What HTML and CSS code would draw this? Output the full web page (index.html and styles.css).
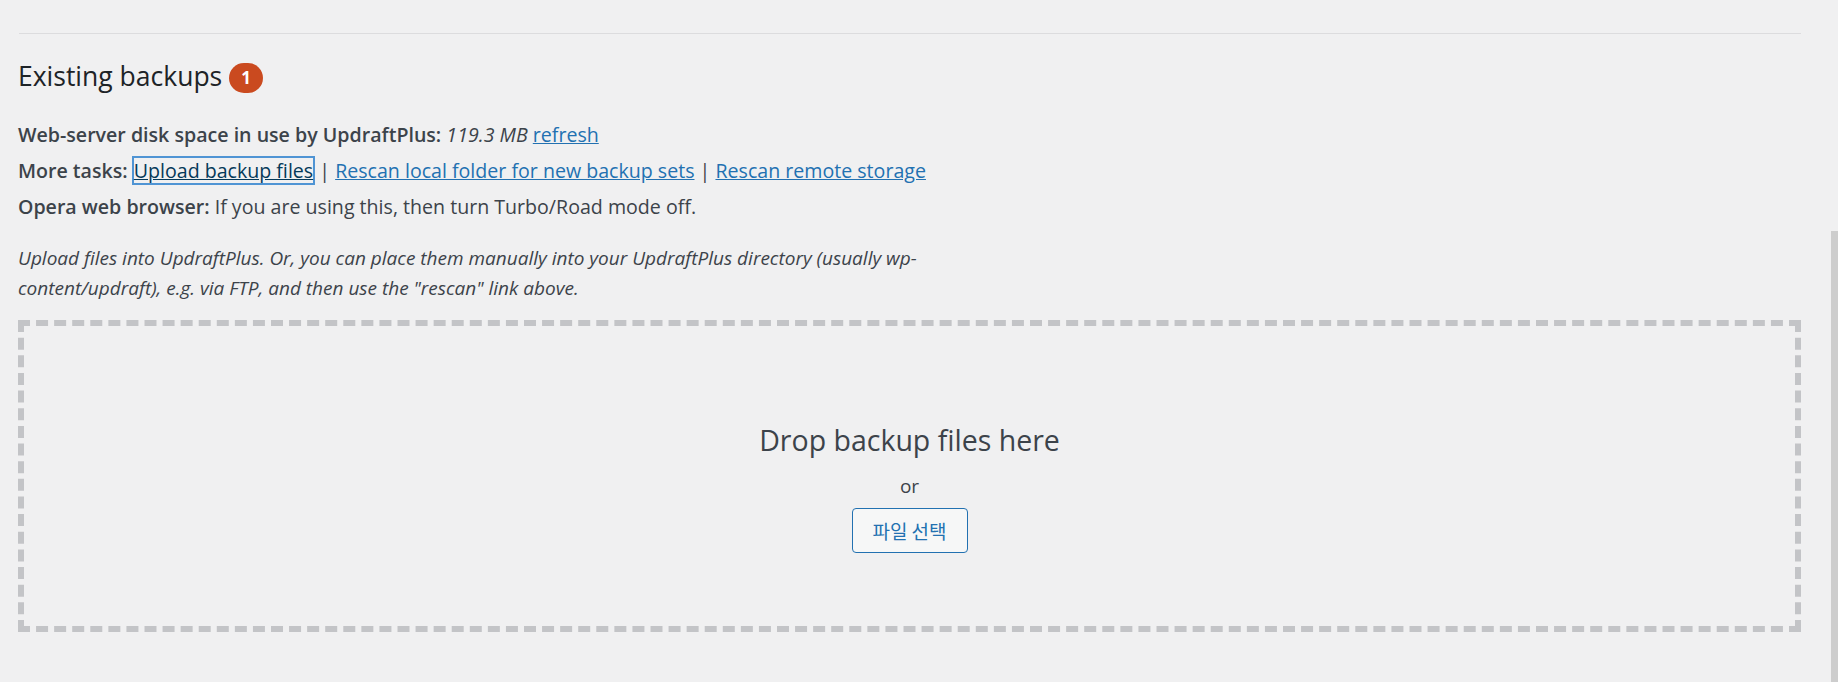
FILE: index.html
```html
<!DOCTYPE html>
<html lang="en">
<head>
<meta charset="utf-8">
<title>Existing backups</title>
<link rel="stylesheet" href="styles.css">
</head>
<body>
<div class="wrap">
  <hr class="rule">
  <h2 class="title">Existing backups <span class="count">1</span></h2>
  <div class="info">
    <div class="line"><strong>Web-server disk space in use by UpdraftPlus:</strong> <em>119.3 MB</em> <a href="#">refresh</a></div>
    <div class="line"><strong>More tasks:</strong> <a href="#" class="focused">Upload backup files</a> | <a href="#">Rescan local folder for new backup sets</a> | <a href="#">Rescan remote storage</a></div>
    <div class="line"><strong>Opera web browser:</strong> If you are using this, then turn Turbo/Road mode off.</div>
  </div>
  <p class="note">Upload files into UpdraftPlus. Or, you can place them manually into your UpdraftPlus directory (usually wp-content/updraft), e.g. via FTP, and then use the "rescan" link above.</p>
  <div class="drop">
    <div class="drop-title">Drop backup files here</div>
    <div class="drop-or">or</div>
    <button class="pick" type="button">파일 선택</button>
  </div>
</div>
<div class="scroll-thumb"></div>
</body>
</html>
```
FILE: styles.css
```css
html, body {
  margin: 0;
  padding: 0;
  background: #f0f0f1;
}
body {
  font-family: "Open Sans", "Noto Sans", "Noto Sans CJK KR", sans-serif;
  color: #3c434a;
  overflow: hidden;
}
.wrap {
  padding: 33px 37px 0 18px;
}
.rule {
  margin: 0 0 0 1px;
  border: 0;
  height: 1px;
  background: #dcdcde;
}
.title {
  margin: 24px 0 0 0;
  font-size: 26.5px;
  line-height: 36px;
  font-weight: 500;
  color: #1d2327;
  display: flex;
  align-items: center;
  gap: 7px;
}
.count {
  display: inline-flex;
  align-items: center;
  justify-content: center;
  width: 34px;
  height: 30px;
  margin-top: 3px;
  border-radius: 15px;
  background: #ca4a1f;
  color: #fff;
  font-size: 17px;
  font-weight: 700;
  line-height: 1;
}
.info {
  margin-top: 22.5px;
  font-size: 19.6px;
  line-height: 36px;
}
.info strong { font-weight: 600; color: #3c434a; }
.info em { font-style: italic; }
a {
  color: #2271b1;
  text-decoration: underline;
}
.focused {
  color: #043959;
  outline: 1px solid #4f94d4;
  box-shadow: 0 0 0 1px #4f94d4 inset;
  padding: 0 1px;
}
.note {
  margin: 18.5px 0 0 0;
  max-width: 925px;
  font-size: 19px;
  line-height: 30px;
  font-style: italic;
  color: #3c434a;
}
.drop {
  margin-top: 17px;
  border: 6px dashed #c3c4c7;
  box-sizing: border-box;
  height: 312px;
  padding-top: 94px;
  display: flex;
  flex-direction: column;
  align-items: center;
}
.drop-title {
  font-size: 28.5px;
  line-height: 40px;
  color: #3c434a;
}
.drop-or {
  margin-top: 12.5px;
  font-size: 19px;
  line-height: 26px;
}
.pick {
  margin-top: 9.5px;
  width: 116px;
  height: 45px;
  border: 1px solid #2271b1;
  border-radius: 4px;
  background: #f6f7f7;
  color: #2271b1;
  font-family: "Noto Sans CJK KR", "Open Sans", sans-serif;
  font-size: 19px;
  padding: 0;
  cursor: pointer;
}
.scroll-thumb {
  position: fixed;
  right: 0;
  top: 231px;
  width: 7px;
  bottom: 0;
  background: #cdcdcd;
}
```
